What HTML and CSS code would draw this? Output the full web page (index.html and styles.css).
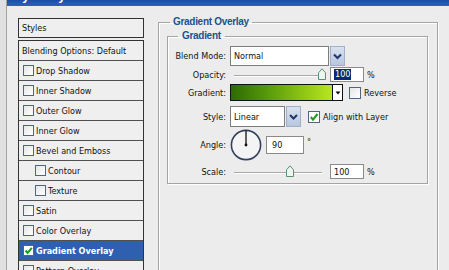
FILE: index.html
```html
<!DOCTYPE html>
<html>
<head>
<meta charset="utf-8">
<link rel="stylesheet" href="styles.css">
</head>
<body>
<div class="edge"></div>
<div class="window">
  <div class="titlebar"><span class="title">Layer Style</span></div>
  <div class="content">
    <div class="side">
      <div class="styles-head">Styles</div>
      <ul class="fx-list">
        <li class="fx-item plain">Blending Options: Default</li>
        <li class="fx-item"><span class="cb"></span>Drop Shadow</li>
        <li class="fx-item"><span class="cb"></span>Inner Shadow</li>
        <li class="fx-item"><span class="cb"></span>Outer Glow</li>
        <li class="fx-item"><span class="cb"></span>Inner Glow</li>
        <li class="fx-item"><span class="cb"></span>Bevel and Emboss</li>
        <li class="fx-item sub"><span class="cb"></span>Contour</li>
        <li class="fx-item sub"><span class="cb"></span>Texture</li>
        <li class="fx-item"><span class="cb"></span>Satin</li>
        <li class="fx-item"><span class="cb"></span>Color Overlay</li>
        <li class="fx-item selected"><span class="cb checked"><svg width="9" height="9" viewBox="0 0 9 9"><path d="M1.5 4.5 L3.6 7 L7.8 1.8" fill="none" stroke="#1e9a1e" stroke-width="2"/></svg></span>Gradient Overlay</li>
        <li class="fx-item"><span class="cb"></span>Pattern Overlay</li>
      </ul>
    </div>
    <fieldset class="group outer">
      <legend>Gradient Overlay</legend>
      <fieldset class="group inner">
        <legend>Gradient</legend>
        <div class="row r-blend">
          <span class="label">Blend Mode:</span>
          <div class="select wide">
            <span class="sel-field">Normal</span>
            <span class="sel-btn"><svg width="13" height="16" viewBox="0 0 13 16"><path d="M3 6.5 L6.5 10 L10 6.5" fill="none" stroke="#1d3570" stroke-width="2"/></svg></span>
          </div>
        </div>
        <div class="row r-opacity">
          <span class="label">Opacity:</span>
          <div class="slider">
            <span class="track"></span>
            <span class="thumb" style="left:88px"><svg width="8" height="12" viewBox="0 0 8 12"><path d="M0.5 11.5 V4.8 L4 0.8 L7.5 4.8 V11.5 Z" fill="#f1f3f1" stroke="#5f8f72"/></svg></span>
          </div>
          <span class="num"><span class="hl">100</span></span>
          <span class="unit">%</span>
        </div>
        <div class="row r-grad">
          <span class="label">Gradient:</span>
          <div class="swatch-wrap">
            <span class="swatch"></span>
            <span class="swatch-btn"><svg width="8" height="15" viewBox="0 0 8 15"><path d="M1.5 6.5 H6.5 L4 9.5 Z" fill="#000"/></svg></span>
          </div>
          <span class="cb plain-cb"></span>
          <span class="cb-label">Reverse</span>
        </div>
        <div class="row r-style">
          <span class="label">Style:</span>
          <div class="select narrow">
            <span class="sel-field">Linear</span>
            <span class="sel-btn"><svg width="13" height="17" viewBox="0 0 13 17"><path d="M3 7 L6.5 10.5 L10 7" fill="none" stroke="#1d3570" stroke-width="2"/></svg></span>
          </div>
          <span class="cb checked align-cb"><svg width="10" height="10" viewBox="0 0 10 10"><path d="M1.8 5 L4 7.6 L8.5 2" fill="none" stroke="#1e9a1e" stroke-width="2"/></svg></span>
          <span class="cb-label">Align with Layer</span>
        </div>
        <div class="row r-angle">
          <span class="label">Angle:</span>
          <svg class="dial" width="32" height="32" viewBox="0 0 32 32"><circle cx="16" cy="16" r="14.6" fill="#f4f4f4" stroke="#34425f" stroke-width="1.6"/><line x1="16" y1="16" x2="16" y2="1.5" stroke="#111" stroke-width="1.3"/><circle cx="16" cy="16" r="1.4" fill="#111"/></svg>
          <span class="num angle-num">90</span>
          <span class="deg">°</span>
        </div>
        <div class="row r-scale">
          <span class="label">Scale:</span>
          <div class="slider">
            <span class="track"></span>
            <span class="thumb" style="left:56px"><svg width="8" height="12" viewBox="0 0 8 12"><path d="M0.5 11.5 V4.8 L4 0.8 L7.5 4.8 V11.5 Z" fill="#f1f3f1" stroke="#5f8f72"/></svg></span>
          </div>
          <span class="num">100</span>
          <span class="unit">%</span>
        </div>
      </fieldset>
    </fieldset>
  </div>
</div>
</body>
</html>
```
FILE: styles.css
```css
html, body {
  margin: 0;
  height: 100%;
  overflow: hidden;
}
body {
  display: flex;
  background: #ececec;
  font-family: "DejaVu Sans Condensed", "Liberation Sans", sans-serif;
  font-stretch: condensed;
  font-size: 9px;
  color: #111;
}
.edge {
  flex: none;
  width: 6px;
  background: #e0e0e0;
  border-right: 1px solid #a2a2a2;
}
.window {
  flex: 1;
  display: flex;
  flex-direction: column;
}
.titlebar {
  flex: none;
  height: 6px;
  overflow: hidden;
  background: linear-gradient(#1f4ca8, #2f60c0);
}
.title {
  display: block;
  margin: -12px 0 0 0;
  font: bold 13px "Liberation Sans", sans-serif;
  line-height: 16px;
  color: #fff;
}
.content {
  display: flex;
  align-items: flex-start;
  padding: 10px 0 0 11px;
}
.side {
  flex: none;
  width: 126px;
  margin-top: 2px;
}
.styles-head {
  height: 18px;
  line-height: 18px;
  padding-left: 3px;
  border: 1px solid #333;
  background: #efefef;
}
.fx-list {
  margin: 2px 0 0;
  padding: 0;
  list-style: none;
  border: 1px solid #333;
  border-bottom: none;
  background: #efefef;
}
.fx-item {
  height: 19px;
  display: flex;
  align-items: center;
  padding-left: 4px;
  border-bottom: 1px solid #505050;
  white-space: nowrap;
}
.fx-item.plain {
  padding-left: 3px;
}
.fx-item.sub {
  padding-left: 16px;
}
.fx-item.selected {
  background: #2f5faf;
  color: #fff;
  font-weight: bold;
}
.cb {
  flex: none;
  box-sizing: border-box;
  width: 11px;
  height: 11px;
  margin-right: 2px;
  border: 1px solid #4f6580;
  background: linear-gradient(135deg, #e6e6e6, #ffffff);
  display: flex;
  align-items: center;
  justify-content: center;
}
.cb.checked {
  background: #fff;
}
.group {
  margin: 0;
  padding: 0;
  min-width: 0;
  border: 1px solid #a4a4a4;
  box-shadow: inset 1px 1px 0 #fff, 1px 1px 0 #fff;
}
.group > legend {
  padding: 0 3px;
  font: bold 10px "Liberation Sans", sans-serif;
  letter-spacing: -0.3px;
  line-height: 12px;
  color: #21508f;
}
.outer {
  flex: none;
  box-sizing: border-box;
  width: 280px;
  height: 300px;
  margin-left: 14px;
}
.outer > legend {
  margin-left: 11px;
}
.inner {
  margin: 2px 9px 0 8px;
  padding: 4px 0 4px 0;
}
.inner > legend {
  margin-left: 10px;
  padding: 0 4px;
}
.row {
  display: flex;
  align-items: center;
}
.label {
  flex: none;
  width: 58px;
  margin-right: 4px;
  text-align: right;
}
.r-blend { height: 20px; }
.r-opacity { height: 15px; margin-top: 1px; }
.r-grad { height: 17px; margin-top: 2px; }
.r-style { height: 21px; margin-top: 5px; }
.r-angle { height: 32px; margin-top: 2px; }
.r-scale { height: 15px; margin-top: 3px; }

.select {
  display: flex;
  gap: 1px;
  height: 100%;
}
.select.wide { width: 115px; }
.select.narrow { width: 71px; }
.sel-field {
  flex: 1;
  box-sizing: border-box;
  display: flex;
  align-items: center;
  padding-left: 3px;
  border: 1px solid #7d7d7d;
  background: #fff;
}
.sel-btn {
  flex: none;
  box-sizing: border-box;
  width: 15px;
  display: flex;
  align-items: center;
  justify-content: center;
  border: 1px solid #9fb0c8;
  background: linear-gradient(#d9e2ef, #b8c7dd);
}
.slider {
  position: relative;
  width: 96px;
  height: 100%;
}
.track {
  position: absolute;
  left: 4px;
  right: 4px;
  top: 8px;
  height: 1px;
  background: #a9a9a9;
  box-shadow: 0 1px 0 #fff;
}
.thumb {
  position: absolute;
  top: 1px;
  line-height: 0;
}
.num {
  flex: none;
  box-sizing: border-box;
  width: 34px;
  height: 15px;
  margin-left: 4px;
  padding-left: 3px;
  display: flex;
  align-items: center;
  border: 1px solid #8a8a8a;
  background: #fff;
}
.hl {
  background: #0b2a6f;
  color: #fff;
  padding: 0 1px;
  line-height: 11px;
}
.unit {
  margin-left: 3px;
}
.swatch-wrap {
  display: flex;
  height: 17px;
  box-sizing: border-box;
  border: 1px solid #111;
}
.swatch {
  width: 101px;
  background: linear-gradient(90deg, #2e6a02 0%, #55980a 35%, #8cc414 70%, #b8e622 100%);
}
.swatch-btn {
  width: 9px;
  border-left: 1px solid #111;
  background: #fff;
  display: flex;
  align-items: center;
  justify-content: center;
}
.plain-cb {
  margin-left: 6px;
  width: 12px;
  height: 12px;
}
.align-cb {
  margin-left: 7px;
  width: 12px;
  height: 12px;
}
.cb-label {
  margin-left: 1px;
}
.dial {
  flex: none;
}
.angle-num {
  width: 38px;
  height: 18px;
  padding-left: 5px;
}
.deg {
  margin-left: 3px;
  align-self: flex-start;
  margin-top: 8px;
}
```
